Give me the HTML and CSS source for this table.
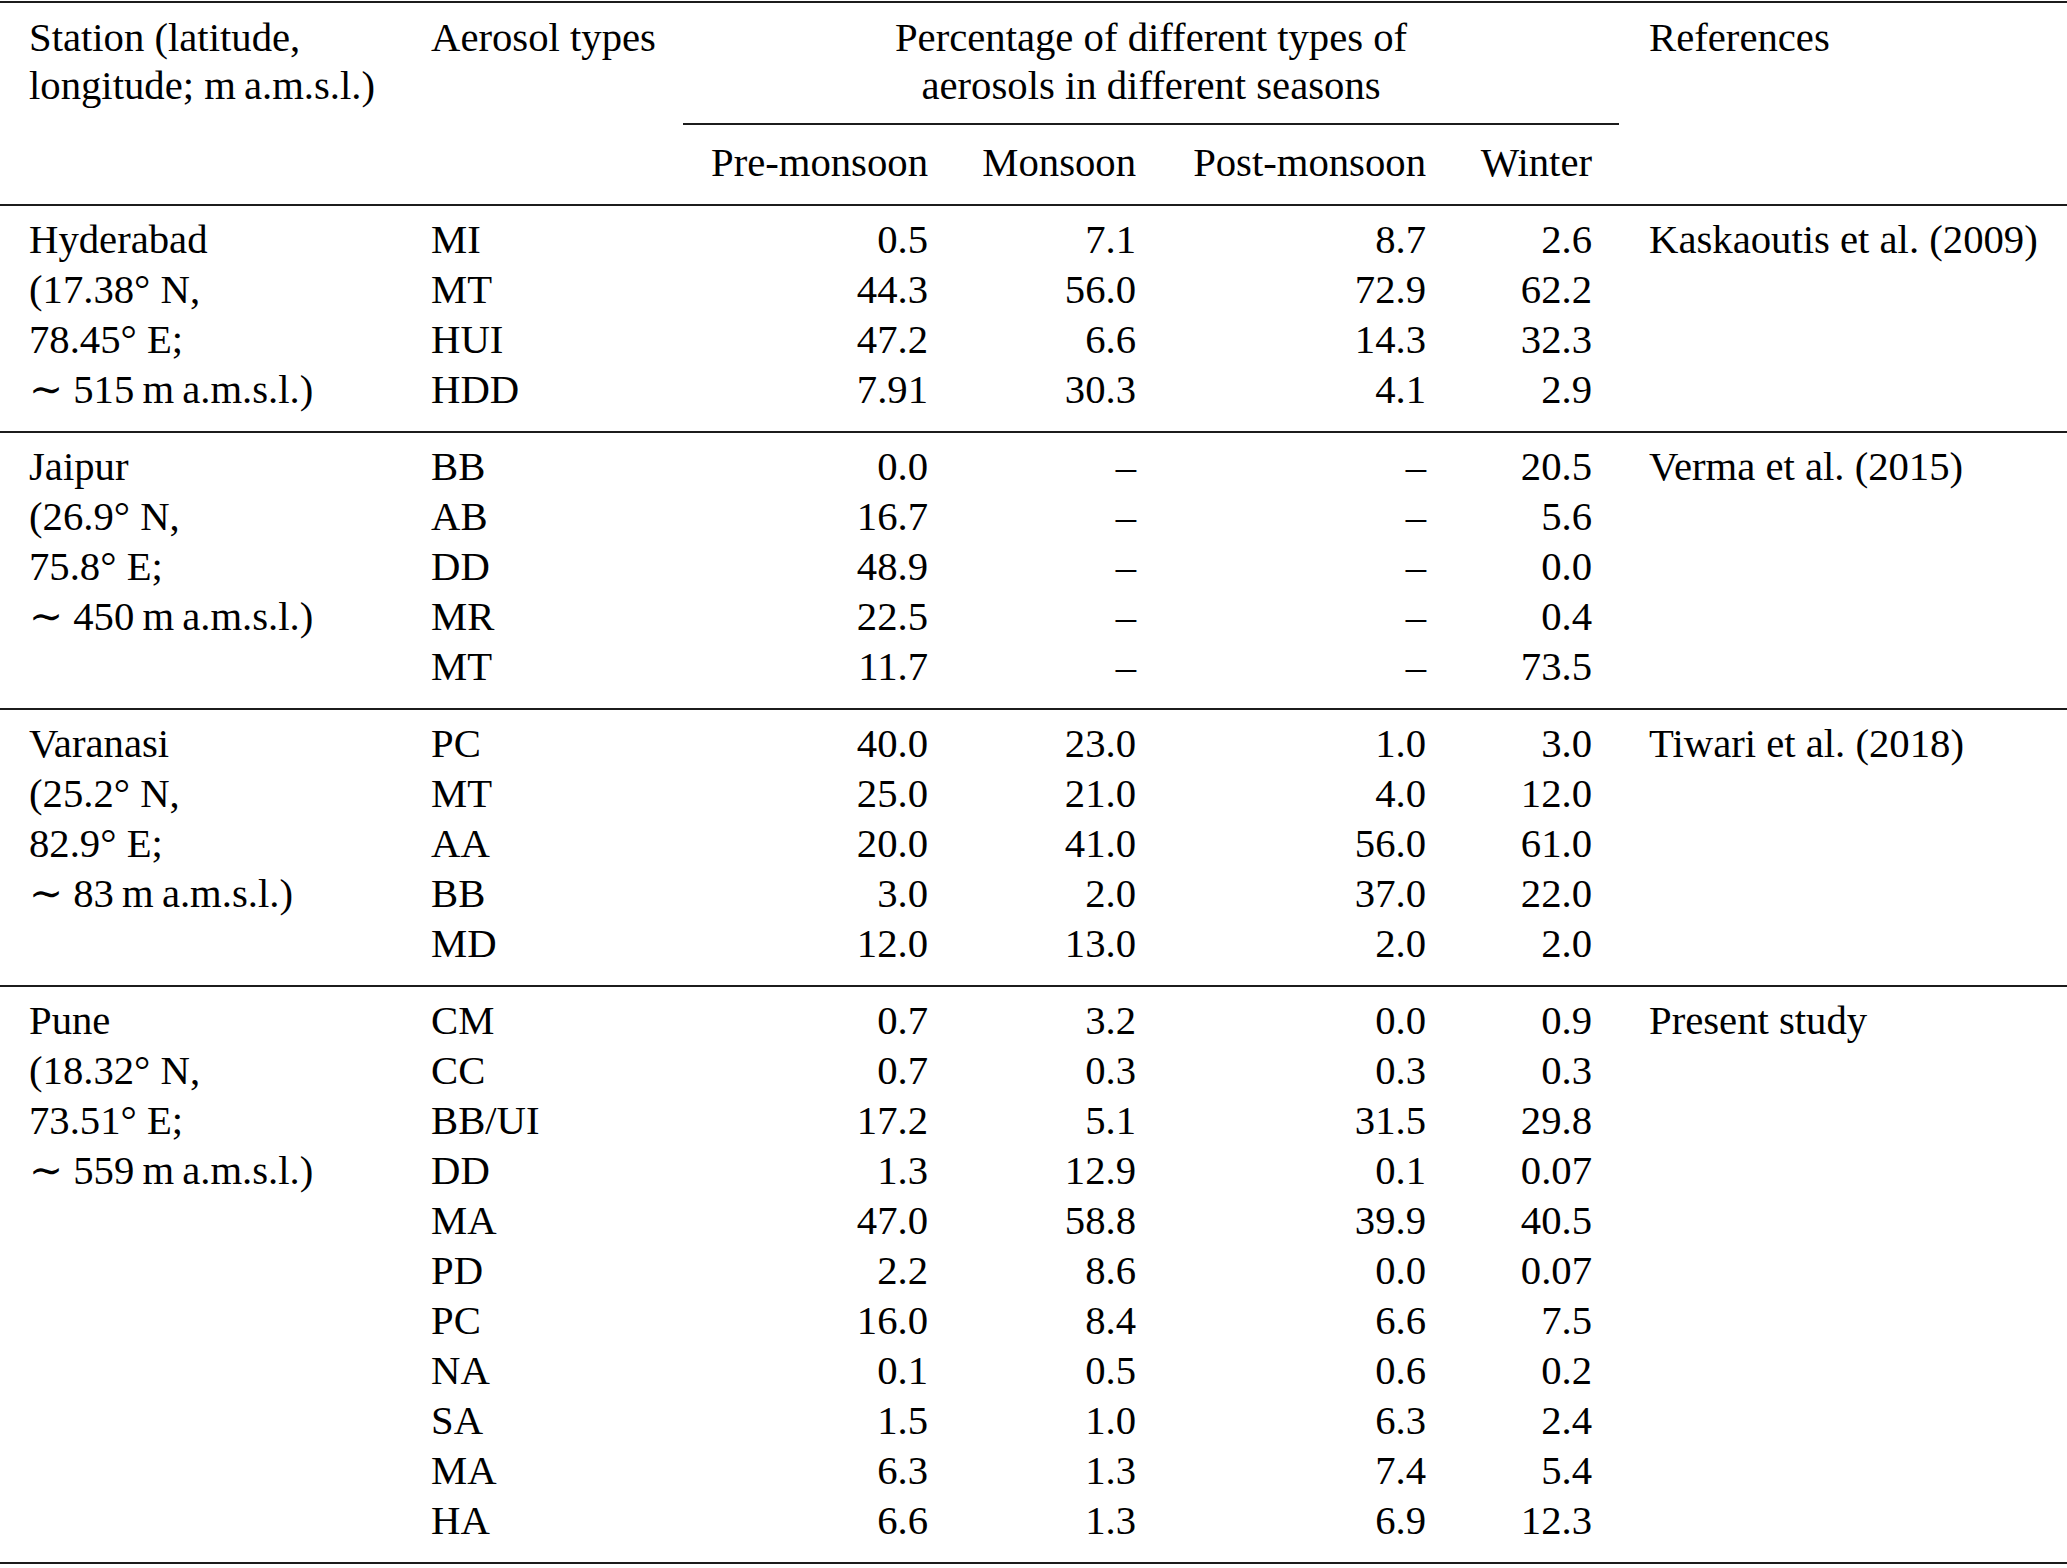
FILE: index.html
```html
<!DOCTYPE html>
<html lang="en">
<head>
<meta charset="utf-8">
<title>Aerosol types by season</title>
<link rel="stylesheet" href="styles.css">
</head>
<body>
<table class="aero">
  <colgroup>
    <col class="w-st">
    <col class="w-ty">
    <col class="w-pre">
    <col class="w-mon">
    <col class="w-post">
    <col class="w-win">
    <col class="w-ref">
  </colgroup>
  <thead>
    <tr class="hrow1">
      <th class="st" rowspan="2">Station (latitude,<br>longitude; m&thinsp;a.m.s.l.)</th>
      <th class="ty" rowspan="2">Aerosol types</th>
      <th class="pct" colspan="4">Percentage of different types of<br>aerosols in different seasons</th>
      <th class="ref" rowspan="2">References</th>
    </tr>
    <tr class="hrow2">
      <th class="num">Pre-monsoon</th>
      <th class="num">Monsoon</th>
      <th class="num">Post-monsoon</th>
      <th class="num">Winter</th>
    </tr>
  </thead>
  <tbody>
    <tr><td class="st" rowspan="4">Hyderabad<br>(17.38° N,<br>78.45° E;<br>∼ 515&thinsp;m&thinsp;a.m.s.l.)</td><td class="ty">MI</td><td class="num">0.5</td><td class="num">7.1</td><td class="num">8.7</td><td class="num">2.6</td><td class="ref" rowspan="4">Kaskaoutis et al. (2009)</td></tr>
    <tr><td class="ty">MT</td><td class="num">44.3</td><td class="num">56.0</td><td class="num">72.9</td><td class="num">62.2</td></tr>
    <tr><td class="ty">HUI</td><td class="num">47.2</td><td class="num">6.6</td><td class="num">14.3</td><td class="num">32.3</td></tr>
    <tr><td class="ty">HDD</td><td class="num">7.91</td><td class="num">30.3</td><td class="num">4.1</td><td class="num">2.9</td></tr>
  </tbody>
  <tbody>
    <tr><td class="st" rowspan="5">Jaipur<br>(26.9° N,<br>75.8° E;<br>∼ 450&thinsp;m&thinsp;a.m.s.l.)</td><td class="ty">BB</td><td class="num">0.0</td><td class="num">–</td><td class="num">–</td><td class="num">20.5</td><td class="ref" rowspan="5">Verma et al. (2015)</td></tr>
    <tr><td class="ty">AB</td><td class="num">16.7</td><td class="num">–</td><td class="num">–</td><td class="num">5.6</td></tr>
    <tr><td class="ty">DD</td><td class="num">48.9</td><td class="num">–</td><td class="num">–</td><td class="num">0.0</td></tr>
    <tr><td class="ty">MR</td><td class="num">22.5</td><td class="num">–</td><td class="num">–</td><td class="num">0.4</td></tr>
    <tr><td class="ty">MT</td><td class="num">11.7</td><td class="num">–</td><td class="num">–</td><td class="num">73.5</td></tr>
  </tbody>
  <tbody>
    <tr><td class="st" rowspan="5">Varanasi<br>(25.2° N,<br>82.9° E;<br>∼ 83&thinsp;m&thinsp;a.m.s.l.)</td><td class="ty">PC</td><td class="num">40.0</td><td class="num">23.0</td><td class="num">1.0</td><td class="num">3.0</td><td class="ref" rowspan="5">Tiwari et al. (2018)</td></tr>
    <tr><td class="ty">MT</td><td class="num">25.0</td><td class="num">21.0</td><td class="num">4.0</td><td class="num">12.0</td></tr>
    <tr><td class="ty">AA</td><td class="num">20.0</td><td class="num">41.0</td><td class="num">56.0</td><td class="num">61.0</td></tr>
    <tr><td class="ty">BB</td><td class="num">3.0</td><td class="num">2.0</td><td class="num">37.0</td><td class="num">22.0</td></tr>
    <tr><td class="ty">MD</td><td class="num">12.0</td><td class="num">13.0</td><td class="num">2.0</td><td class="num">2.0</td></tr>
  </tbody>
  <tbody>
    <tr><td class="st" rowspan="11">Pune<br>(18.32° N,<br>73.51° E;<br>∼ 559&thinsp;m&thinsp;a.m.s.l.)</td><td class="ty">CM</td><td class="num">0.7</td><td class="num">3.2</td><td class="num">0.0</td><td class="num">0.9</td><td class="ref" rowspan="11">Present study</td></tr>
    <tr><td class="ty">CC</td><td class="num">0.7</td><td class="num">0.3</td><td class="num">0.3</td><td class="num">0.3</td></tr>
    <tr><td class="ty">BB/UI</td><td class="num">17.2</td><td class="num">5.1</td><td class="num">31.5</td><td class="num">29.8</td></tr>
    <tr><td class="ty">DD</td><td class="num">1.3</td><td class="num">12.9</td><td class="num">0.1</td><td class="num">0.07</td></tr>
    <tr><td class="ty">MA</td><td class="num">47.0</td><td class="num">58.8</td><td class="num">39.9</td><td class="num">40.5</td></tr>
    <tr><td class="ty">PD</td><td class="num">2.2</td><td class="num">8.6</td><td class="num">0.0</td><td class="num">0.07</td></tr>
    <tr><td class="ty">PC</td><td class="num">16.0</td><td class="num">8.4</td><td class="num">6.6</td><td class="num">7.5</td></tr>
    <tr><td class="ty">NA</td><td class="num">0.1</td><td class="num">0.5</td><td class="num">0.6</td><td class="num">0.2</td></tr>
    <tr><td class="ty">SA</td><td class="num">1.5</td><td class="num">1.0</td><td class="num">6.3</td><td class="num">2.4</td></tr>
    <tr><td class="ty">MA</td><td class="num">6.3</td><td class="num">1.3</td><td class="num">7.4</td><td class="num">5.4</td></tr>
    <tr><td class="ty">HA</td><td class="num">6.6</td><td class="num">1.3</td><td class="num">6.9</td><td class="num">12.3</td></tr>
  </tbody>
</table>
</body>
</html>
```

FILE: styles.css
```css
html, body {
  margin: 0;
  padding: 0;
  background: #ffffff;
}

body {
  padding-top: 1px;
}

.aero {
  width: 2067px;
  table-layout: fixed;
  border-collapse: collapse;
  font-family: "Liberation Serif", "Times New Roman", "DejaVu Serif", serif;
  font-size: 40.7px;
  line-height: 50px;
  color: #000;
}

.w-st { width: 403px; }
.w-ty { width: 280px; }
.w-pre { width: 272px; }
.w-mon { width: 208px; }
.w-post { width: 290px; }
.w-win { width: 166px; }
.w-ref { width: 448px; }

.aero th,
.aero td {
  font-weight: normal;
  vertical-align: top;
  text-align: left;
  white-space: nowrap;
  padding: 0;
}

.aero thead {
  border-top: 2px solid #1c1c1c;
  border-bottom: 2px solid #1c1c1c;
}

.aero tbody {
  border-bottom: 2px solid #1c1c1c;
}

.aero .st { padding-left: 29px; padding-right: 10px; }
.aero .ty { padding-left: 28px; }
.aero .ref { padding-left: 30px; }
.aero .num { text-align: right; padding-right: 27px; }

.hrow1 th {
  padding-top: 11px;
  line-height: 48px;
}
.hrow1 .pct {
  text-align: center;
  padding-bottom: 13px;
  border-bottom: 2px solid #1c1c1c;
}
.hrow2 th { padding-top: 13px; padding-bottom: 16px; }

.aero tbody tr:first-child td { padding-top: 9px; }
.aero tbody tr:last-child td { padding-bottom: 16px; }
```
